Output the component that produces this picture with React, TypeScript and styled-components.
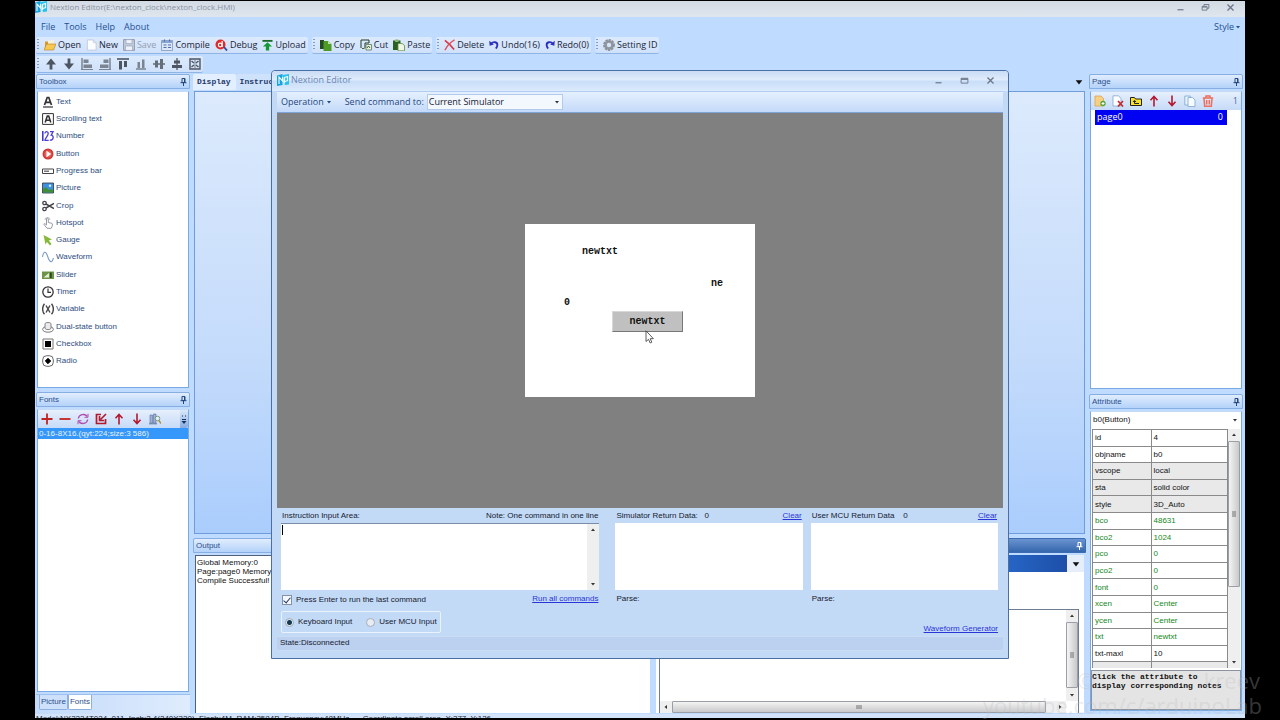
import React from "react";
import styled, { createGlobalStyle, css } from "styled-components";

const sans = `"Liberation Sans", Arial, sans-serif`;
const ui = `"Open Sans", "Noto Sans", sans-serif`;
const mono = `"Liberation Mono", monospace`;

const Global = createGlobalStyle`
  * { box-sizing: border-box; }
  body { margin: 0; background: #000; }
  button, input, select, textarea { font: inherit; color: inherit; margin: 0; padding: 0; border: 0; background: none; border-radius: 0; outline: 0; }
`;

/* ---------- shell ---------- */

const Screen = styled.div`
  height: 100vh;
  padding: 1px 35px 2px;
  background: #000;
  position: relative;
  overflow: hidden;
  font: 8px/12px ${sans};
  color: #1c2430;
`;
const AppWindow = styled.div`
  position: relative;
  height: 100%;
  display: flex;
  flex-direction: column;
  background: #bfdbff;
  overflow: hidden;
`;
const TitleBar = styled.header`
  flex: 0 0 16px;
  display: flex;
  align-items: center;
  gap: 3px;
  padding: 0 10px 4px 0;
  background: linear-gradient(#d2dae4, #e0e6ed);
  color: #8791a1;
  font: 8px/12px ${ui};
`;
const WindowButtons = styled.div<{ $gap: number }>`
  margin-left: auto;
  display: flex;
  gap: ${(p) => p.$gap}px;
  button { display: flex; }
`;
const MenuBar = styled.nav`
  flex: 0 0 19px;
  display: flex;
  align-items: center;
  gap: 9px;
  padding: 1px 4px 0 6px;
  font: 9px/12px ${ui};
  color: #24508f;
`;
const StyleMenu = styled.button`
  margin-left: auto;
  display: flex;
  align-items: center;
  gap: 1px;
`;
const ToolRow = styled.div<{ $h: number }>`
  flex: 0 0 ${(p) => p.$h}px;
  display: flex;
  align-items: center;
  gap: 4px;
  padding-left: 1px;
`;
const ToolGroup = styled.div<{ $gap: number }>`
  height: 17px;
  display: flex;
  align-items: center;
  gap: ${(p) => p.$gap}px;
  padding-right: 2px;
  border-radius: 2px;
  border-bottom: 1px solid #8fb4e6;
  background: linear-gradient(#dceafd, #cfe1fa);
`;
const Grip = styled.span`
  width: 2px;
  height: 12px;
  margin-left: 1px;
  background: repeating-linear-gradient(#7f9cc8 0 1px, transparent 1px 3px);
`;
const ToolButton = styled.button<{ $off?: boolean }>`
  display: flex;
  align-items: center;
  gap: 2px;
  font: 9px/12px ${ui};
  white-space: nowrap;
  color: ${(p) => (p.$off ? "#93a0b2" : "#1b2638")};
`;
const Workspace = styled.main`
  flex: 1 1 0;
  min-height: 0;
  display: flex;
  gap: 3px;
  padding: 0 2px 0 1px;
`;
const SideColumn = styled.aside`
  flex: 0 0 154px;
  display: flex;
  flex-direction: column;
  min-height: 0;
`;
const CentreColumn = styled.section`
  flex: 1 1 0;
  min-width: 0;
  display: flex;
  flex-direction: column;
`;
const StatusBar = styled.footer`
  flex: 0 0 4px;
  overflow: hidden;
  padding-left: 1px;
  background: #d3e4fa;
  font: 8px/10px ${sans};
  color: #1e2a3c;
  white-space: pre;
`;

/* ---------- docked panels ---------- */

const PanelHead = styled.h2<{ $dark?: boolean }>`
  margin: 0;
  flex: 0 0 15px;
  display: flex;
  align-items: center;
  justify-content: space-between;
  padding: 0 2px;
  border: 1px solid ${(p) => (p.$dark ? "#3c6cb4" : "#86aee2")};
  border-radius: 2px 2px 0 0;
  background: ${(p) => (p.$dark ? "linear-gradient(#6a94d0, #3566ac)" : "linear-gradient(#e1edfd, #b4d2fa)")};
  color: ${(p) => (p.$dark ? "#fff" : "#2a4f8c")};
  font: 8px/12px ${sans};
  button { display: flex; }
`;
const PanelBody = styled.div<{ $grow?: boolean; $h?: number }>`
  flex: ${(p) => (p.$grow ? "1 1 0" : `0 0 ${p.$h}px`)};
  min-height: 0;
  margin: 2px 1px 0;
  display: flex;
  flex-direction: column;
  background: #fff;
  border: 1px solid #79a9e2;
  border-top-color: #c5daf5;
`;
const ToolList = styled.ul`
  list-style: none;
  margin: 0;
  padding: 1px 4px 0;
  height: 278px;
  display: grid;
  grid-template-rows: repeat(16, 1fr);
`;
const ToolItem = styled.li`
  display: flex;
  button {
    display: flex;
    align-items: center;
    gap: 2px;
    font: 8px/12px ${sans};
    color: #2d4d80;
  }
`;
const MiniBar = styled.div`
  flex: 0 0 18px;
  display: flex;
  align-items: center;
  gap: 6px;
  padding: 0 3px;
  background: linear-gradient(#e6effc, #c6dbf8);
  button { display: flex; }
`;
const MiniEnd = styled.span`
  margin-left: auto;
  font: 9px/12px ${ui};
  color: #4a6da5;
`;
const Overflow = styled.button`
  margin: 0 -3px 0 auto;
  height: 18px;
  flex-direction: column;
  justify-content: center;
  align-items: center;
  gap: 2px;
  padding: 0 1px;
  border-radius: 0 2px 2px 0;
  background: linear-gradient(#dbe8fa, #86abe2);
`;
const FontRow = styled.button`
  display: block;
  width: 100%;
  padding-left: 1px;
  text-align: left;
  background: #3597fa;
  color: #e8f3ff;
  font: 8px/11px ${sans};
`;
const PageRow = styled.button`
  display: flex;
  justify-content: space-between;
  margin: 0 14px 0 4px;
  padding: 1px 4px 2px 2px;
  background: #0202f2;
  color: #fff;
  font: 9px/12px ${ui};
`;
const BottomTabs = styled.div`
  flex: 0 0 20px;
  margin-top: 2px;
  padding-left: 3px;
  display: flex;
  align-items: flex-start;
  border-top: 1px solid #9bbfee;
  background: linear-gradient(90deg, #c3dafa, #dfecfd);
`;
const BottomTab = styled.button<{ $on?: boolean }>`
  height: 15px;
  padding: 0 1px;
  font: 8px/12px ${sans};
  color: #2a4f8c;
  border: 1px solid #8eb0de;
  border-top: 0;
  border-radius: 0 0 2px 2px;
  background: ${(p) => (p.$on ? "#fff" : "#cfe1fa")};
`;
const Gap = styled.div<{ $h: number }>`
  flex: 0 0 ${(p) => p.$h}px;
`;

/* ---------- document area ---------- */

const DocTabs = styled.div`
  flex: 0 0 16px;
  display: flex;
  align-items: stretch;
  padding-right: 2px;
  > button:last-child { margin-left: auto; display: flex; align-items: center; }
`;
const DocTab = styled.button<{ $on?: boolean }>`
  padding: 0 5px 0 4px;
  font: bold 8px/12px ${mono};
  color: #1f3a6b;
  border-radius: 2px 2px 0 0;
  background: ${(p) => (p.$on ? "#e3effe" : "#cfe2fb")};
`;
const DocCanvas = styled.div`
  flex: 1 1 0;
  margin: 1px 1px 0 1px;
  border: 1px solid #6f9cda;
  background: linear-gradient(#dceafc, #c4dbfb 60%, #aacdfd);
`;
const LowerRow = styled.div`
  flex: 0 0 176px;
  margin-top: 4px;
  display: flex;
  gap: 6px;
  min-height: 0;
`;
const OutputPanel = styled.section`
  flex: 457 1 0;
  display: flex;
  flex-direction: column;
`;
const OutputText = styled.pre`
  flex: 1;
  margin: 2px 0 1px 2px;
  padding: 2px 1px;
  background: #fff;
  border-left: 1px solid #4f6078;
  border-top: 1px solid #4f6078;
  font: 8px/9px ${sans};
  color: #111;
`;
const EventPanel = styled.section`
  flex: 430 1 0;
  display: flex;
  flex-direction: column;
`;
const EventBody = styled.div`
  flex: 1;
  margin: 2px 2px 1px 0;
  display: flex;
  flex-direction: column;
  background: #fff;
`;
const EventTabs = styled.div`
  flex: 0 0 17px;
  display: flex;
  background: #e6eefa;
`;
const EventTab = styled.button`
  flex: 1;
  background: linear-gradient(90deg, #3f83dc, #2766c6 85%, #1d4fa8);
`;
const EventMenu = styled.button`
  flex: 0 0 17px;
  display: flex;
  align-items: center;
  justify-content: center;
`;
const EventCode = styled.div`
  flex: 1;
  margin: 37px 5px 0 3px;
  border: 1px solid #6f7d92;
  border-bottom: 0;
  display: grid;
  grid-template-columns: 1fr 12px;
  grid-template-rows: 1fr 12px;
`;

/* ---------- scroll bars ---------- */

const BarTrack = styled.div<{ $across?: boolean }>`
  display: flex;
  flex-direction: ${(p) => (p.$across ? "row" : "column")};
  background: #efefef;
`;
const BarArrow = styled.span`
  flex: 0 0 12px;
  display: flex;
  align-items: center;
  justify-content: center;
`;
const BarThumb = styled.span<{ $across?: boolean; $part: number }>`
  flex: ${(p) => p.$part} 1 0;
  display: flex;
  align-items: center;
  justify-content: center;
  border: 1px solid #9a9ea6;
  border-radius: 1px;
  background: ${(p) => (p.$across ? "linear-gradient(#f4f4f4, #c9c9cb)" : "linear-gradient(90deg, #f4f4f4, #c9c9cb)")};
`;
const BarRest = styled.span<{ $part: number }>`
  flex: ${(p) => p.$part} 1 0;
`;

const arrows = { up: "M1 4 3 1.5 5 4z", down: "M1 2 5 2 3 4.5z", left: "M4 1 1.5 3 4 5z", right: "M2 1 4.5 3 2 5z" };
const Tri = ({ dir = "down", size = 6, fill = "#333" }: { dir?: keyof typeof arrows; size?: number; fill?: string }) => (
  <svg width={size} height={size} viewBox="0 0 6 6" aria-hidden="true"><path d={arrows[dir]} fill={fill} /></svg>
);

const ScrollBar = ({ across, part, rest }: { across?: boolean; part: number; rest: number }) => (
  <BarTrack $across={across}>
    <BarArrow><Tri dir={across ? "left" : "up"} /></BarArrow>
    {part > 0 && (
      <BarThumb $across={across} $part={part}>
        <svg width="6" height="6" viewBox="0 0 6 6" aria-hidden="true">
          <path d={across ? "M1 1v4M3 1v4M5 1v4" : "M1 1h4M1 3h4M1 5h4"} stroke="#555" strokeWidth=".8" />
        </svg>
      </BarThumb>
    )}
    <BarRest $part={rest} />
    <BarArrow><Tri dir={across ? "right" : "down"} /></BarArrow>
  </BarTrack>
);

/* ---------- attribute panel ---------- */

const Combo = styled.div`
  position: relative;
  display: flex;
  svg { position: absolute; right: 3px; top: calc(50% - 3px); pointer-events: none; }
`;
const AttrSelect = styled.select`
  appearance: none;
  width: 100%;
  height: 16px;
  padding-left: 2px;
  background: #fff;
  font: 8px/12px ${sans};
  color: #111;
`;
const AttrArea = styled.div`
  flex: 1 1 0;
  min-height: 0;
  margin: 1px 1px 2px;
  display: grid;
  grid-template-columns: 1fr 12px;
`;
const AttrClip = styled.div`
  overflow: hidden;
  min-height: 0;
  border-left: 1px solid #8a8a8a;
`;
const AttrTable = styled.table`
  width: 100%;
  height: 250px;
  table-layout: fixed;
  border-collapse: collapse;
`;
const AttrRow = styled.tr<{ $tone: "plain" | "grey" | "green" }>`
  background: ${(p) => (p.$tone === "grey" ? "#e9e9e9" : "#fff")};
  color: ${(p) => (p.$tone === "green" ? "#16871b" : "#111")};
  th, td {
    padding: 1px 2px 0;
    border: 1px solid #8a8a8a;
    border-left: 0;
    text-align: left;
    font: 8px/12px ${sans};
  }
  th { width: 58px; }
`;
const AttrNote = styled.p`
  flex: 0 0 40px;
  margin: 0;
  padding: 1px 0;
  border: 1px solid #8b93a0;
  background: #e4e4e4;
  font: bold 8px/9px ${mono};
  color: #111;
  white-space: pre;
`;

/* ---------- simulator window ---------- */

const Dialog = styled.section`
  position: absolute;
  top: 69px;
  left: 236px;
  right: 236px;
  padding: 0 5px 7px;
  border: 1px solid #4a6fa5;
  border-radius: 4px 4px 0 0;
  background: #c3daf7;
`;
const DialogTitle = styled.header`
  height: 20px;
  margin: 0 -5px;
  padding: 0 13px 2px 5px;
  display: flex;
  align-items: center;
  gap: 2px;
  border-radius: 3px 3px 0 0;
  background: linear-gradient(#c9dcf5, #e0ecfb 45%, #c8ddf8 50%, #dcebfd);
  font: 9px/12px ${ui};
  color: #6a86b4;
`;
const DialogBar = styled.div`
  height: 22px;
  display: flex;
  align-items: center;
  padding: 0 4px 1px;
  border-top: 1px solid #b3cdf0;
  border-bottom: 1px solid #7fa3d6;
  background: linear-gradient(#e5f0fe, #c4dafa);
  font: 9px/12px ${ui};
  color: #24477f;
  > button { display: flex; align-items: center; gap: 2px; margin-right: 13px; }
`;
const TargetSelect = styled.select`
  appearance: none;
  width: 136px;
  height: 16px;
  margin-left: 3px;
  padding-left: 1px;
  border: 1px solid #b3cbea;
  background: #f3f8ff;
  color: #15202f;
`;
const Stage = styled.div`
  height: 395px;
  display: flex;
  align-items: center;
  justify-content: center;
  background: #808080;
`;
const Lcd = styled.div`
  position: relative;
  width: 230px;
  height: 173px;
  background: #fff;
  color: #111;
  font: bold 10px/12px ${mono};
`;
const LcdItem = styled.span<{ $x: number; $y: number }>`
  position: absolute;
  left: ${(p) => p.$x}px;
  top: ${(p) => p.$y}px;
`;
const LcdButton = styled.button`
  position: absolute;
  left: 87px;
  top: 87px;
  width: 71px;
  height: 21px;
  background: #c0c0c0;
  border: 1px solid;
  border-color: #d8d8d8 #777 #777 #d8d8d8;
`;
const Pointer = styled.svg`
  position: absolute;
  left: 120px;
  top: 106px;
`;
const Form = styled.div`
  padding: 2px 5px 1px 4px;
  display: grid;
  grid-template-columns: 326fr 187fr 187fr;
  column-gap: 8px;
  color: #16202e;
`;
const Field = styled.div<{ $wide?: boolean }>`
  display: flex;
  flex-direction: column;
  padding-right: ${(p) => (p.$wide ? 8 : 0)}px;
`;
const FieldHead = styled.div`
  height: 13px;
  display: flex;
  justify-content: space-between;
  padding: 0 1px;
  label { white-space: pre; }
`;
const Link = styled.a`
  color: #2a35d8;
  text-decoration: underline;
`;
const TextBox = styled.div<{ $lined?: boolean }>`
  position: relative;
  height: 67px;
  margin-bottom: 3px;
  display: grid;
  grid-template-columns: 1fr ${(p) => (p.$lined ? "12px" : "")};
  background: #fff;
  ${(p) => p.$lined && css`border-top: 1px solid #7a8ca8;`}
  textarea { resize: none; width: 100%; }
`;
const Caret = styled.span`
  position: absolute;
  left: 1px;
  top: 1px;
  width: 1px;
  height: 10px;
  background: #000;
`;
const Check = styled.label`
  display: flex;
  align-items: center;
  gap: 4px;
  input {
    appearance: none;
    width: 10px;
    height: 10px;
    display: grid;
    place-items: center;
    border: 1px solid #8492a8;
    background: #f4f7fb;
  }
  input:checked::before {
    content: "";
    width: 3px;
    height: 6px;
    margin-bottom: 2px;
    border: solid #223a66;
    border-width: 0 1px 1px 0;
    transform: rotate(40deg);
  }
`;
const RadioBox = styled.div`
  margin-top: 5px;
  width: 160px;
  height: 22px;
  padding: 0 3px;
  display: flex;
  align-items: center;
  gap: 14px;
  border: 1px solid #e9f2fd;
  border-radius: 2px;
`;
const Radio = styled.label`
  display: flex;
  align-items: center;
  gap: 4px;
  white-space: nowrap;
  input {
    appearance: none;
    width: 9px;
    height: 9px;
    border: 1px solid #a4adba;
    border-radius: 50%;
    background: #e9edf2;
  }
  input:checked { background: radial-gradient(circle, #16384e 0 2px, #dfe8ee 3px); }
`;
const WaveLink = styled.div`
  margin-top: 17px;
  text-align: right;
`;
const StateBar = styled.div`
  height: 15px;
  padding: 0 3px;
  background: #bcd0f0;
  border: solid #cbdcf5;
  border-width: 1px 0;
  color: #16202e;
`;

/* ---------- overlay credit ---------- */

const Credit = styled.div`
  position: absolute;
  right: 18px;
  bottom: 2px;
  width: 281px;
  pointer-events: none;
  font: 22px/25px ${ui};
  color: rgba(190, 190, 190, 0.3);
  text-align: right;
`;
const CreditName = styled.div`
  display: flex;
  justify-content: space-between;
  padding: 0 2px 0 96px;
`;

/* ---------- icons ---------- */

const Ico = ({ children, w = 12, h = 12 }: { children: React.ReactNode; w?: number; h?: number }) => (
  <svg width={w} height={h} viewBox="0 0 12 12" fill="none" aria-hidden="true">{children}</svg>
);

const Logo = () => (
  <Ico>
    <path d="M0 1.5 5.5 0v11L0 12z" fill="#14a3e2" />
    <path d="M5.5 1 12 0v10.5L8 11z" fill="#25c3ec" />
    <path d="M2 10V3l3.500 4V3M7.500 9V3.500l3-1v4L8 7.500" stroke="#e6faff" strokeWidth="1.200" />
  </Ico>
);
const Pin = ({ c = "#24477f" }: { c?: string }) => (
  <svg width="7" height="8" viewBox="0 0 7 8" fill="none" aria-hidden="true">
    <path d="M2 .5h3v4H2zM.5 4.7h6M3.5 5v3" stroke={c} />
    <path d="M4 1h1v3.5H4z" fill={c} />
  </svg>
);
const Min = () => <Ico w={9} h={9}><path d="M2 9h8" stroke="#6c7788" strokeWidth="1.6" /></Ico>;
const Restore = () => <Ico w={9} h={9}><path d="M1.500 4.500h6.500v5h-6.500zM4 4V2h6.500v5H8M1.500 5.500h6" stroke="#6c7788" strokeWidth="1.200" /></Ico>;
const Max = () => <Ico w={9} h={9}><path d="M1.500 3h9v6.500h-9z" stroke="#6c7788" strokeWidth="1.200" /><path d="M1.500 4.200h9" stroke="#6c7788" strokeWidth="2" /></Ico>;
const Close = () => <Ico w={9} h={9}><path d="m2 2 8 8M10 2l-8 8" stroke="#6c7788" strokeWidth="1.800" /></Ico>;

const I = {
  open: <Ico><path d="M1 2.500h4l1 1.500h4v6H1z" fill="#d99b2b" /><path d="M4 1.500 10 1v5H4z" fill="#f5f0da" /><path d="M0 11 2.500 5H12l-2.500 6z" fill="#f7c852" stroke="#b97d1e" strokeWidth=".6" /></Ico>,
  fresh: <Ico w={11}><path d="M1.500.5H8l3 3v8H1.500z" fill="#fafcff" stroke="#b3bfd0" strokeWidth=".7" /><path d="M8 .5v3h3" stroke="#b3bfd0" strokeWidth=".7" /></Ico>,
  save: <Ico><path d="M.6.6h10.800v10.800H.6z" fill="#c3cddb" stroke="#8e9bb0" /><path d="M3 .6h6v4H3zM2.500 7h7v4.400h-7z" fill="#eef3fa" stroke="#8e9bb0" strokeWidth=".6" /></Ico>,
  compile: <Ico><path d="M.5 1.500h11v10H.5z" fill="#dbe7f8" stroke="#8197bd" strokeWidth=".8" /><path d="M.5 1.500h11v2.500H.5z" fill="#8ba5d2" /><path d="M2.500 6h3M7 6h3M2.500 8.500h3M7 8.500h3M3.500.5v2M8.500.5v2" stroke="#4f6ea8" strokeWidth="1.200" /></Ico>,
  debug: <Ico w={13}><circle cx="5" cy="5.500" r="5" fill="#e02a2a" /><circle cx="4.700" cy="6" r="1.800" stroke="#fff" strokeWidth="1.200" /><path d="M6.700 2v6" stroke="#fff" strokeWidth="1.200" /><path d="m8.500 8 3 3.500" stroke="#2b4a9b" strokeWidth="1.800" /></Ico>,
  upload: <Ico w={11}><path d="M.5 1.500h11" stroke="#1c6b2a" strokeWidth="2" /><path d="M6 3 1 7.500h3.200V12h3.600V7.500H11z" fill="#159a33" /></Ico>,
  copy: <Ico><path d="M0 1h4v9H0z" fill="#234a23" /><path d="M3.500 2H8l3.500 3v7h-8z" fill="#4e9a26" /><path d="M8 2v3h3.500" fill="#bfe3a4" /></Ico>,
  cut: <Ico><path d="M1 9V1h8v3M9 4H5v5" stroke="#243b24" /><path d="M6 5.500h5.500V11H6z" fill="#e8f1e4" stroke="#5b7a54" strokeWidth=".8" /><path d="M7 9l1.500-2L10 9M2 9.500h2.500" stroke="#31542d" strokeWidth=".9" /></Ico>,
  paste: <Ico><path d="M0 1.500h7.500V11H0z" fill="#2c5f22" /><path d="M2 .5h3.500V3H2z" fill="#8bb67a" /><path d="M5 4.500h4l2.500 2v5.300H5z" fill="#eef7e6" stroke="#5d8e3e" strokeWidth=".8" /></Ico>,
  del: <Ico w={11}><path d="M1 1c4 3 7 6 10 10" stroke="#d9343f" strokeWidth="1.800" /><path d="M11.500.5C7 3 3.500 7 1 11.500" stroke="#e0505a" strokeWidth="1.500" /></Ico>,
  undo: <Ico w={10}><path d="M2.500 4.500C5 1.500 10.500 2 10 6.500 9.800 8 9 9.500 8 10" stroke="#2a2fc0" strokeWidth="2.200" /><path d="M.3 1 .8 7l5-1.500z" fill="#2a2fc0" /></Ico>,
  redo: <Ico w={10}><path d="M9.500 4.500C7 1.500 1.500 2 2 6.500 2.200 8 3 9.500 4 10" stroke="#2a2fc0" strokeWidth="2.200" /><path d="M11.700 1 11.200 7l-5-1.500z" fill="#2a2fc0" /></Ico>,
  gear: <Ico><circle cx="6" cy="6" r="4.800" stroke="#8a8f96" strokeWidth="2.200" strokeDasharray="2.200 .9" /><circle cx="6" cy="6" r="3.500" stroke="#8f959c" strokeWidth="2.600" /></Ico>,
};

const fileGroups: { id: keyof typeof I; label: string; off?: boolean }[][] = [
  [
    { id: "open", label: "Open" },
    { id: "fresh", label: "New" },
    { id: "save", label: "Save", off: true },
    { id: "compile", label: "Compile" },
    { id: "debug", label: "Debug" },
    { id: "upload", label: "Upload" },
  ],
  [
    { id: "copy", label: "Copy" },
    { id: "cut", label: "Cut" },
    { id: "paste", label: "Paste" },
  ],
  [
    { id: "del", label: "Delete" },
    { id: "undo", label: "Undo(16)" },
    { id: "redo", label: "Redo(0)" },
  ],
  [{ id: "gear", label: "Setting ID" }],
];

const G = "#4d5561";
const alignIcons: [string, React.ReactNode][] = [
  ["Bring up", <Ico><path d="M6 11.500V4" stroke={G} strokeWidth="2.800" /><path d="M1 6.500 6 .5l5 6z" fill={G} /></Ico>],
  ["Send down", <Ico><path d="M6 .5V8" stroke={G} strokeWidth="2.800" /><path d="M1 5.500 6 11.500l5-6z" fill={G} /></Ico>],
  ["Align left", <Ico><path d="M1 0v12" stroke={G} /><path d="M2.500 1.500h5V5h-5zM2.500 6.500H11V10H2.500z" fill="#7b8490" /><path d="M0 11.500h12" stroke="#7b8490" /></Ico>],
  ["Align right", <Ico><path d="M11 0v12" stroke={G} /><path d="M4.500 1.500h5V5h-5zM1 6.500h8.500V10H1z" fill="#7b8490" /><path d="M0 11.500h12" stroke="#7b8490" /></Ico>],
  ["Align top", <Ico><path d="M0 1h12" stroke={G} strokeWidth="1.600" /><path d="M2 3h3v8.500H2zM7 3h3v6H7z" fill={G} /></Ico>],
  ["Align bottom", <Ico><path d="M1 11h10" stroke={G} /><path d="M2.500 4h2.500v6H2.500zM7 1.500h2.500V10H7z" fill="#7b8490" /></Ico>],
  ["Align middle", <Ico><path d="M0 6h12" stroke={G} strokeWidth="1.300" /><path d="M2 2.500h3v7H2zM7 1h3v10H7z" fill="#666e7a" /></Ico>],
  ["Align centre", <Ico><path d="M6 0v12" stroke={G} strokeWidth="1.300" /><path d="M3 2.500h6v3H3zM1 7h10v3H1z" fill={G} /></Ico>],
  ["Same size", <Ico><path d="M1 1h10v10H1z" stroke={G} strokeWidth="1.400" /><path d="M2.500 3 5 5M9.500 3 7 5M2.500 9 5 7M9.500 9 7 7" stroke={G} strokeWidth="1.400" /><path d="M6 2v8" stroke={G} strokeWidth=".7" /></Ico>],
];

const toolbox: [string, React.ReactNode][] = [
  ["Text", <Ico><path d="M2.500 9 5.200 1.500h1.600L9.500 9M3.800 6.300h4.400" stroke="#333" strokeWidth="1.700" /><path d="M1 11h10" stroke="#333" strokeWidth="1.200" /></Ico>],
  ["Scrolling text", <Ico><path d="M.6.6h10.800v10.800H.6z" stroke="#333" /><path d="M3.200 9.500 5.300 3h1.400l2.100 6.500M4.200 7.300h3.600" stroke="#333" strokeWidth="1.600" /></Ico>],
  ["Number", <Ico><path d="M.8 1v10" stroke="#3a2fc4" strokeWidth="1.500" /><path d="M3 3.500c0-2.500 3.200-2.500 3.200 0C6.200 6 3 8 3 10.300h3.700M8 1.700h3L9.200 5.200c3 0 2.600 5.500-1.400 4.900" stroke="#4a3fd4" strokeWidth="1.300" /></Ico>],
  ["Button", <Ico><circle cx="6" cy="6" r="5.500" fill="#cf3a35" /><circle cx="6" cy="6" r="3.600" fill="#e8625c" /><path d="M4.500 2.800 9.200 6l-4.700 3.200z" fill="#fff" /></Ico>],
  ["Progress bar", <Ico><path d="M.5 4h11v4.500H.5z" stroke="#444" /><path d="M2 5.500h5v1.500H2z" fill="#777" /></Ico>],
  ["Picture", <Ico><path d="M.5 1h11v10H.5z" fill="#3d8fe0" stroke="#333" strokeWidth=".8" /><path d="M1 10.500V7l3-2 3 3 2-1 2.200 1.500v2z" fill="#3f8f3a" /><circle cx="8" cy="3.800" r="1.200" fill="#d6ecff" /></Ico>],
  ["Crop", <Ico><circle cx="2.500" cy="3" r="1.700" stroke="#444" strokeWidth="1.300" /><circle cx="2.500" cy="9" r="1.700" stroke="#444" strokeWidth="1.300" /><path d="M4 4l8 4.500M4 8l8-4.500" stroke="#444" strokeWidth="1.500" /></Ico>],
  ["Hotspot", <Ico><path d="M4.500 8V2c0-1.200 1.800-1.200 1.800 0v3.500l3.500.8c1 .3.700 3-.6 5H5L2 7.500c-.5-1 .8-1.300 2.500.5z" stroke="#8b8f98" strokeWidth=".9" /><path d="M3 3a2.500 2.500 0 0 1 5 0" stroke="#aaaeb6" strokeWidth=".8" /></Ico>],
  ["Gauge", <Ico><path d="m1.500 1 8.500 4.500-3.200 1L9.500 10 8 11.500 5 8 3.500 10.500z" fill="#86b83c" /></Ico>],
  ["Waveform", <Ico><path d="M.5 6C1.500-.5 4 0 5.500 5s4 9 6 2" stroke="#7f9cc6" strokeWidth="1.100" /></Ico>],
  ["Slider", <Ico><path d="M0 2.500h12v7.500H0z" fill="#6f9448" /><path d="M1.500 8.500 7 4v4.500z" fill="#e5efd6" /><path d="M8 3.500h1.800V9H8z" fill="#2e4a1c" /></Ico>],
  ["Timer", <Ico><circle cx="6" cy="6" r="5.200" stroke="#333" strokeWidth="1.300" /><path d="M6 2.500V6.300h3" stroke="#333" strokeWidth="1.200" /></Ico>],
  ["Variable", <Ico><path d="M2.500.8C0 3.500 0 8.500 2.500 11.200M9.500.8c2.500 2.700 2.500 7.700 0 10.400M4 2.500l4 7M8 2.500l-4 7" stroke="#444" strokeWidth="1.400" /></Ico>],
  ["Dual-state button", <Ico><ellipse cx="6" cy="8.300" rx="5.400" ry="2.900" stroke="#777" /><path d="M3 7.500V3c0-2 6-2 6 0v4.500c-1 1.500-5 1.500-6 0z" fill="#e9ebee" stroke="#777" strokeWidth=".9" /></Ico>],
  ["Checkbox", <Ico><path d="M1 1h10v10H1z" stroke="#777" /><path d="M3 3h6v6H3z" fill="#000" /></Ico>],
  ["Radio", <Ico><rect x=".7" y=".7" width="10.600" height="10.600" rx="4" stroke="#555" strokeWidth=".9" /><path d="M6 3.300 8.700 6 6 8.700 3.300 6z" fill="#000" stroke="#000" /></Ico>],
];

const R = "#b3182d";
const up = <Ico><path d="M6 11.500V2M2.500 5.200 6 1.500l3.500 3.700" stroke={R} strokeWidth="1.600" /></Ico>;
const down = <Ico><path d="M6 .5V10M2.500 6.800 6 10.500l3.500-3.700" stroke={R} strokeWidth="1.600" /></Ico>;

const fontTools: [string, React.ReactNode][] = [
  ["Add font", <Ico><path d="M6 .5v11M.5 6h11" stroke="#c22323" strokeWidth="1.800" /></Ico>],
  ["Remove font", <Ico><path d="M.5 6h11" stroke="#c22323" strokeWidth="1.800" /></Ico>],
  ["Replace font", <Ico><path d="M1.300 5.500C2 1 8 .3 10.300 3.500M10.700 6.500C10 11 4 11.700 1.700 8.500" stroke="#b04fb0" strokeWidth="1.300" /><path d="M11 .8v3.500H7.500M1 11.200V7.700h3.500" stroke="#b04fb0" /></Ico>],
  ["Import font", <Ico><path d="M6 1.500H1.500v9h9V6" stroke={R} strokeWidth="1.700" /><path d="M11 1 5.500 6.500M4.500 3v4.500H9" stroke={R} strokeWidth="1.600" /></Ico>],
  ["Move up", up],
  ["Move down", down],
  ["Preview font", <Ico><path d="M1 2h2.500v8H1zM4.500 1H7v9H4.500z" fill="#9db0d6" stroke="#5d6f9c" strokeWidth=".6" /><circle cx="8.500" cy="5.500" r="2.300" fill="#dff0fb" stroke="#6b8a66" strokeWidth=".8" /><path d="m10 7.500 2 3" stroke="#b08a2c" strokeWidth="1.400" /><path d="M0 10.800h8" stroke="#5d6f9c" /></Ico>],
];
const pageTools: [string, React.ReactNode][] = [
  ["Add page", <Ico><path d="M1 1h6l2.500 2.500V11H1z" fill="#f8cf86" stroke="#d99c3e" strokeWidth=".7" /><circle cx="9" cy="8.500" r="2.700" fill="#5aa83c" /><path d="M9 7v3M7.500 8.500h3" stroke="#fff" /></Ico>],
  ["Delete page", <Ico><path d="M1 .8h5.500L9 3.500V11H1z" fill="#fff" stroke="#7fa3cf" strokeWidth=".8" /><path d="m6 6 5 5.500M11 6l-5 5.500" stroke="#c02a33" strokeWidth="1.700" /></Ico>],
  ["Open folder", <Ico><path d="M.5 10.500V2.500h4l1 1.500h6v6.500z" fill="#f7e227" stroke="#222" /><path d="M4.500 8.500V6M3 7l1.500-1.700L6 7M4.500 8.500H9" stroke="#222" /></Ico>],
  ["Move up", up],
  ["Move down", down],
  ["Copy page", <Ico><path d="M.8 1h5.500v9H.8z" fill="#e6f2fd" stroke="#7ca6d2" strokeWidth=".8" /><path d="M4 2.500h4.500L11 5v6.500H4z" fill="#f5fbff" stroke="#7ca6d2" strokeWidth=".8" /></Ico>],
  ["Clear pages", <Ico><path d="M.8 3h10.400M4 2.500V1h4v1.500M2 3.500l.7 7.700h6.600l.7-7.700M4.700 5v4.500M7.300 5v4.500" stroke="#ec6f5e" strokeWidth="1.500" /></Ico>],
];

const attributes: [string, string, "plain" | "grey" | "green"][] = [
  ["id", "4", "plain"],
  ["objname", "b0", "plain"],
  ["vscope", "local", "grey"],
  ["sta", "solid color", "grey"],
  ["style", "3D_Auto", "grey"],
  ["bco", "48631", "green"],
  ["bco2", "1024", "green"],
  ["pco", "0", "green"],
  ["pco2", "0", "green"],
  ["font", "0", "green"],
  ["xcen", "Center", "green"],
  ["ycen", "Center", "green"],
  ["txt", "newtxt", "green"],
  ["txt-maxl", "10", "plain"],
  ["isbr", "False", "grey"],
];

const Head = ({ title, dark }: { title: string; dark?: boolean }) => (
  <PanelHead $dark={dark}>
    {title || <span />}
    <button aria-label="Pin panel"><Pin c={dark ? "#fff" : undefined} /></button>
  </PanelHead>
);

const ReturnData = ({ id, label }: { id: string; label: string }) => (
  <Field>
    <FieldHead>
      <label htmlFor={id}>{label}</label>
      <Link href="#clear">Clear</Link>
    </FieldHead>
    <TextBox><textarea id={id} readOnly /></TextBox>
    <FieldHead><span>Parse:</span></FieldHead>
    {id === "mcu" && <WaveLink><Link href="#waveform">Waveform Generator</Link></WaveLink>}
  </Field>
);

export default function App() {
  return (
    <Screen>
      <Global />
      <AppWindow>
        <TitleBar>
          <Logo />
          Nextion Editor(E:\nexton_clock\nexton_clock.HMI)
          <WindowButtons $gap={16}>
            <button aria-label="Minimize"><Min /></button>
            <button aria-label="Restore"><Restore /></button>
            <button aria-label="Close"><Close /></button>
          </WindowButtons>
        </TitleBar>
        <MenuBar>
          {["File", "Tools", "Help", "About"].map((m) => <button key={m}>{m}</button>)}
          <StyleMenu>Style<Tri fill="#24508f" size={6} /></StyleMenu>
        </MenuBar>
        <ToolRow $h={18}>
          {fileGroups.map((group, i) => (
            <ToolGroup key={i} $gap={5}>
              <Grip />
              {group.map((b) => (
                <ToolButton key={b.id} $off={b.off} disabled={b.off}>{I[b.id]}{b.label}</ToolButton>
              ))}
            </ToolGroup>
          ))}
        </ToolRow>
        <ToolRow $h={20}>
          <ToolGroup $gap={6}>
            <Grip />
            {alignIcons.map(([name, icon]) => <ToolButton key={name} aria-label={name}>{icon}</ToolButton>)}
          </ToolGroup>
        </ToolRow>

        <Workspace>
          <SideColumn>
            <Head title="Toolbox" />
            <PanelBody $h={297}>
              <ToolList>
                {toolbox.map(([name, icon]) => (
                  <ToolItem key={name}><button>{icon}{name}</button></ToolItem>
                ))}
              </ToolList>
            </PanelBody>
            <Gap $h={4} />
            <Head title="Fonts" />
            <PanelBody $grow>
              <MiniBar>
                {fontTools.map(([name, icon]) => <button key={name} aria-label={name}>{icon}</button>)}
                <Overflow aria-label="More">
                  <svg width="6" height="9" viewBox="0 0 6 9" aria-hidden="true">
                    <path d="M1 1h1M4 1h1M1 4.500h4" stroke="#16305e" />
                    <path d="M.5 6h5L3 9z" fill="#16305e" />
                  </svg>
                </Overflow>
              </MiniBar>
              <FontRow>0-16-8X16.(qyt:224;size:3 586)</FontRow>
            </PanelBody>
            <BottomTabs>
              <BottomTab>Picture</BottomTab>
              <BottomTab $on>Fonts</BottomTab>
            </BottomTabs>
          </SideColumn>

          <CentreColumn>
            <DocTabs>
              <DocTab $on>Display</DocTab>
              <DocTab>Instruction</DocTab>
              <button aria-label="Open documents"><Tri size={10} fill="#111" /></button>
            </DocTabs>
            <DocCanvas />
            <LowerRow>
              <OutputPanel>
                <Head title="Output" />
                <OutputText>{"Global Memory:0\nPage:page0 Memory occupied:0\nCompile Successful! 0 Errors,0 Warnings"}</OutputText>
              </OutputPanel>
              <EventPanel>
                <Head title="" dark />
                <EventBody>
                  <EventTabs>
                    <EventTab aria-label="Event" />
                    <EventMenu aria-label="Event list"><Tri size={10} fill="#111" /></EventMenu>
                  </EventTabs>
                  <EventCode>
                    <div />
                    <ScrollBar part={63} rest={1} />
                    <ScrollBar across part={374} rest={8} />
                    <span />
                  </EventCode>
                </EventBody>
              </EventPanel>
            </LowerRow>
          </CentreColumn>

          <SideColumn>
            <Head title="Page" />
            <PanelBody $h={298}>
              <MiniBar>
                {pageTools.map(([name, icon]) => <button key={name} aria-label={name}>{icon}</button>)}
                <MiniEnd>1</MiniEnd>
              </MiniBar>
              <PageRow><span>page0</span><span>0</span></PageRow>
            </PanelBody>
            <Gap $h={5} />
            <Head title="Attribute" />
            <PanelBody $grow>
              <Combo>
                <AttrSelect aria-label="Component" defaultValue="b0">
                  <option value="b0">b0(Button)</option>
                </AttrSelect>
                <Tri />
              </Combo>
              <AttrArea>
                <AttrClip>
                  <AttrTable>
                    <tbody>
                      {attributes.map(([name, value, tone]) => (
                        <AttrRow key={name} $tone={tone}><th scope="row">{name}</th><td>{value}</td></AttrRow>
                      ))}
                    </tbody>
                  </AttrTable>
                </AttrClip>
                <ScrollBar part={145} rest={70} />
              </AttrArea>
              <AttrNote>{"Click the attribute to\ndisplay corresponding notes"}</AttrNote>
            </PanelBody>
            <Gap $h={3} />
          </SideColumn>
        </Workspace>
        <StatusBar>Model:NX3224T024_011  Inch:2.4(240X320)  Flash:4M  RAM:3584B  Frequency:48MHz      Coordinate scroll area  X:377  Y:126</StatusBar>

        <Dialog aria-label="Nextion Editor">
          <DialogTitle>
            <Logo />
            Nextion Editor
            <WindowButtons $gap={17}>
              <button aria-label="Minimize"><Min /></button>
              <button aria-label="Maximize"><Max /></button>
              <button aria-label="Close"><Close /></button>
            </WindowButtons>
          </DialogTitle>
          <DialogBar>
            <button>Operation<Tri size={6} fill="#24477f" /></button>
            <label htmlFor="target">Send command to:</label>
            <Combo>
              <TargetSelect id="target" defaultValue="sim"><option value="sim">Current Simulator</option></TargetSelect>
              <Tri />
            </Combo>
          </DialogBar>
          <Stage>
            <Lcd>
              <LcdItem $x={57} $y={22}>newtxt</LcdItem>
              <LcdItem $x={186} $y={54}>ne</LcdItem>
              <LcdItem $x={39} $y={73}>0</LcdItem>
              <LcdButton>newtxt</LcdButton>
              <Pointer width="9" height="14" viewBox="0 0 9 14" aria-hidden="true">
                <path d="M1 .8v10.700l2.500-2.200 1.700 3.700 1.600-.8L5.200 8.700h3.200z" fill="#fff" stroke="#333" strokeWidth=".8" />
              </Pointer>
            </Lcd>
          </Stage>
          <Form>
            <Field $wide>
              <FieldHead>
                <label htmlFor="cmd">Instruction Input Area:</label>
                <span>Note: One command in one line</span>
              </FieldHead>
              <TextBox $lined>
                <textarea id="cmd" />
                <ScrollBar part={0} rest={1} />
                <Caret />
              </TextBox>
              <FieldHead>
                <Check><input type="checkbox" defaultChecked />Press Enter to run the last command</Check>
                <Link href="#run">Run all commands</Link>
              </FieldHead>
              <RadioBox role="radiogroup" aria-label="Input source">
                <Radio><input type="radio" name="source" defaultChecked />Keyboard Input</Radio>
                <Radio><input type="radio" name="source" />User MCU Input</Radio>
              </RadioBox>
            </Field>
            <ReturnData id="sim" label="Simulator Return Data:   0" />
            <ReturnData id="mcu" label="User MCU Return Data    0" />
          </Form>
          <StateBar>State:Disconnected</StateBar>
        </Dialog>
      </AppWindow>
      <Credit>
        <CreditName><span>©</span><span>kreev</span></CreditName>
        youtube.com/c/arduinoLab
      </Credit>
    </Screen>
  );
}
